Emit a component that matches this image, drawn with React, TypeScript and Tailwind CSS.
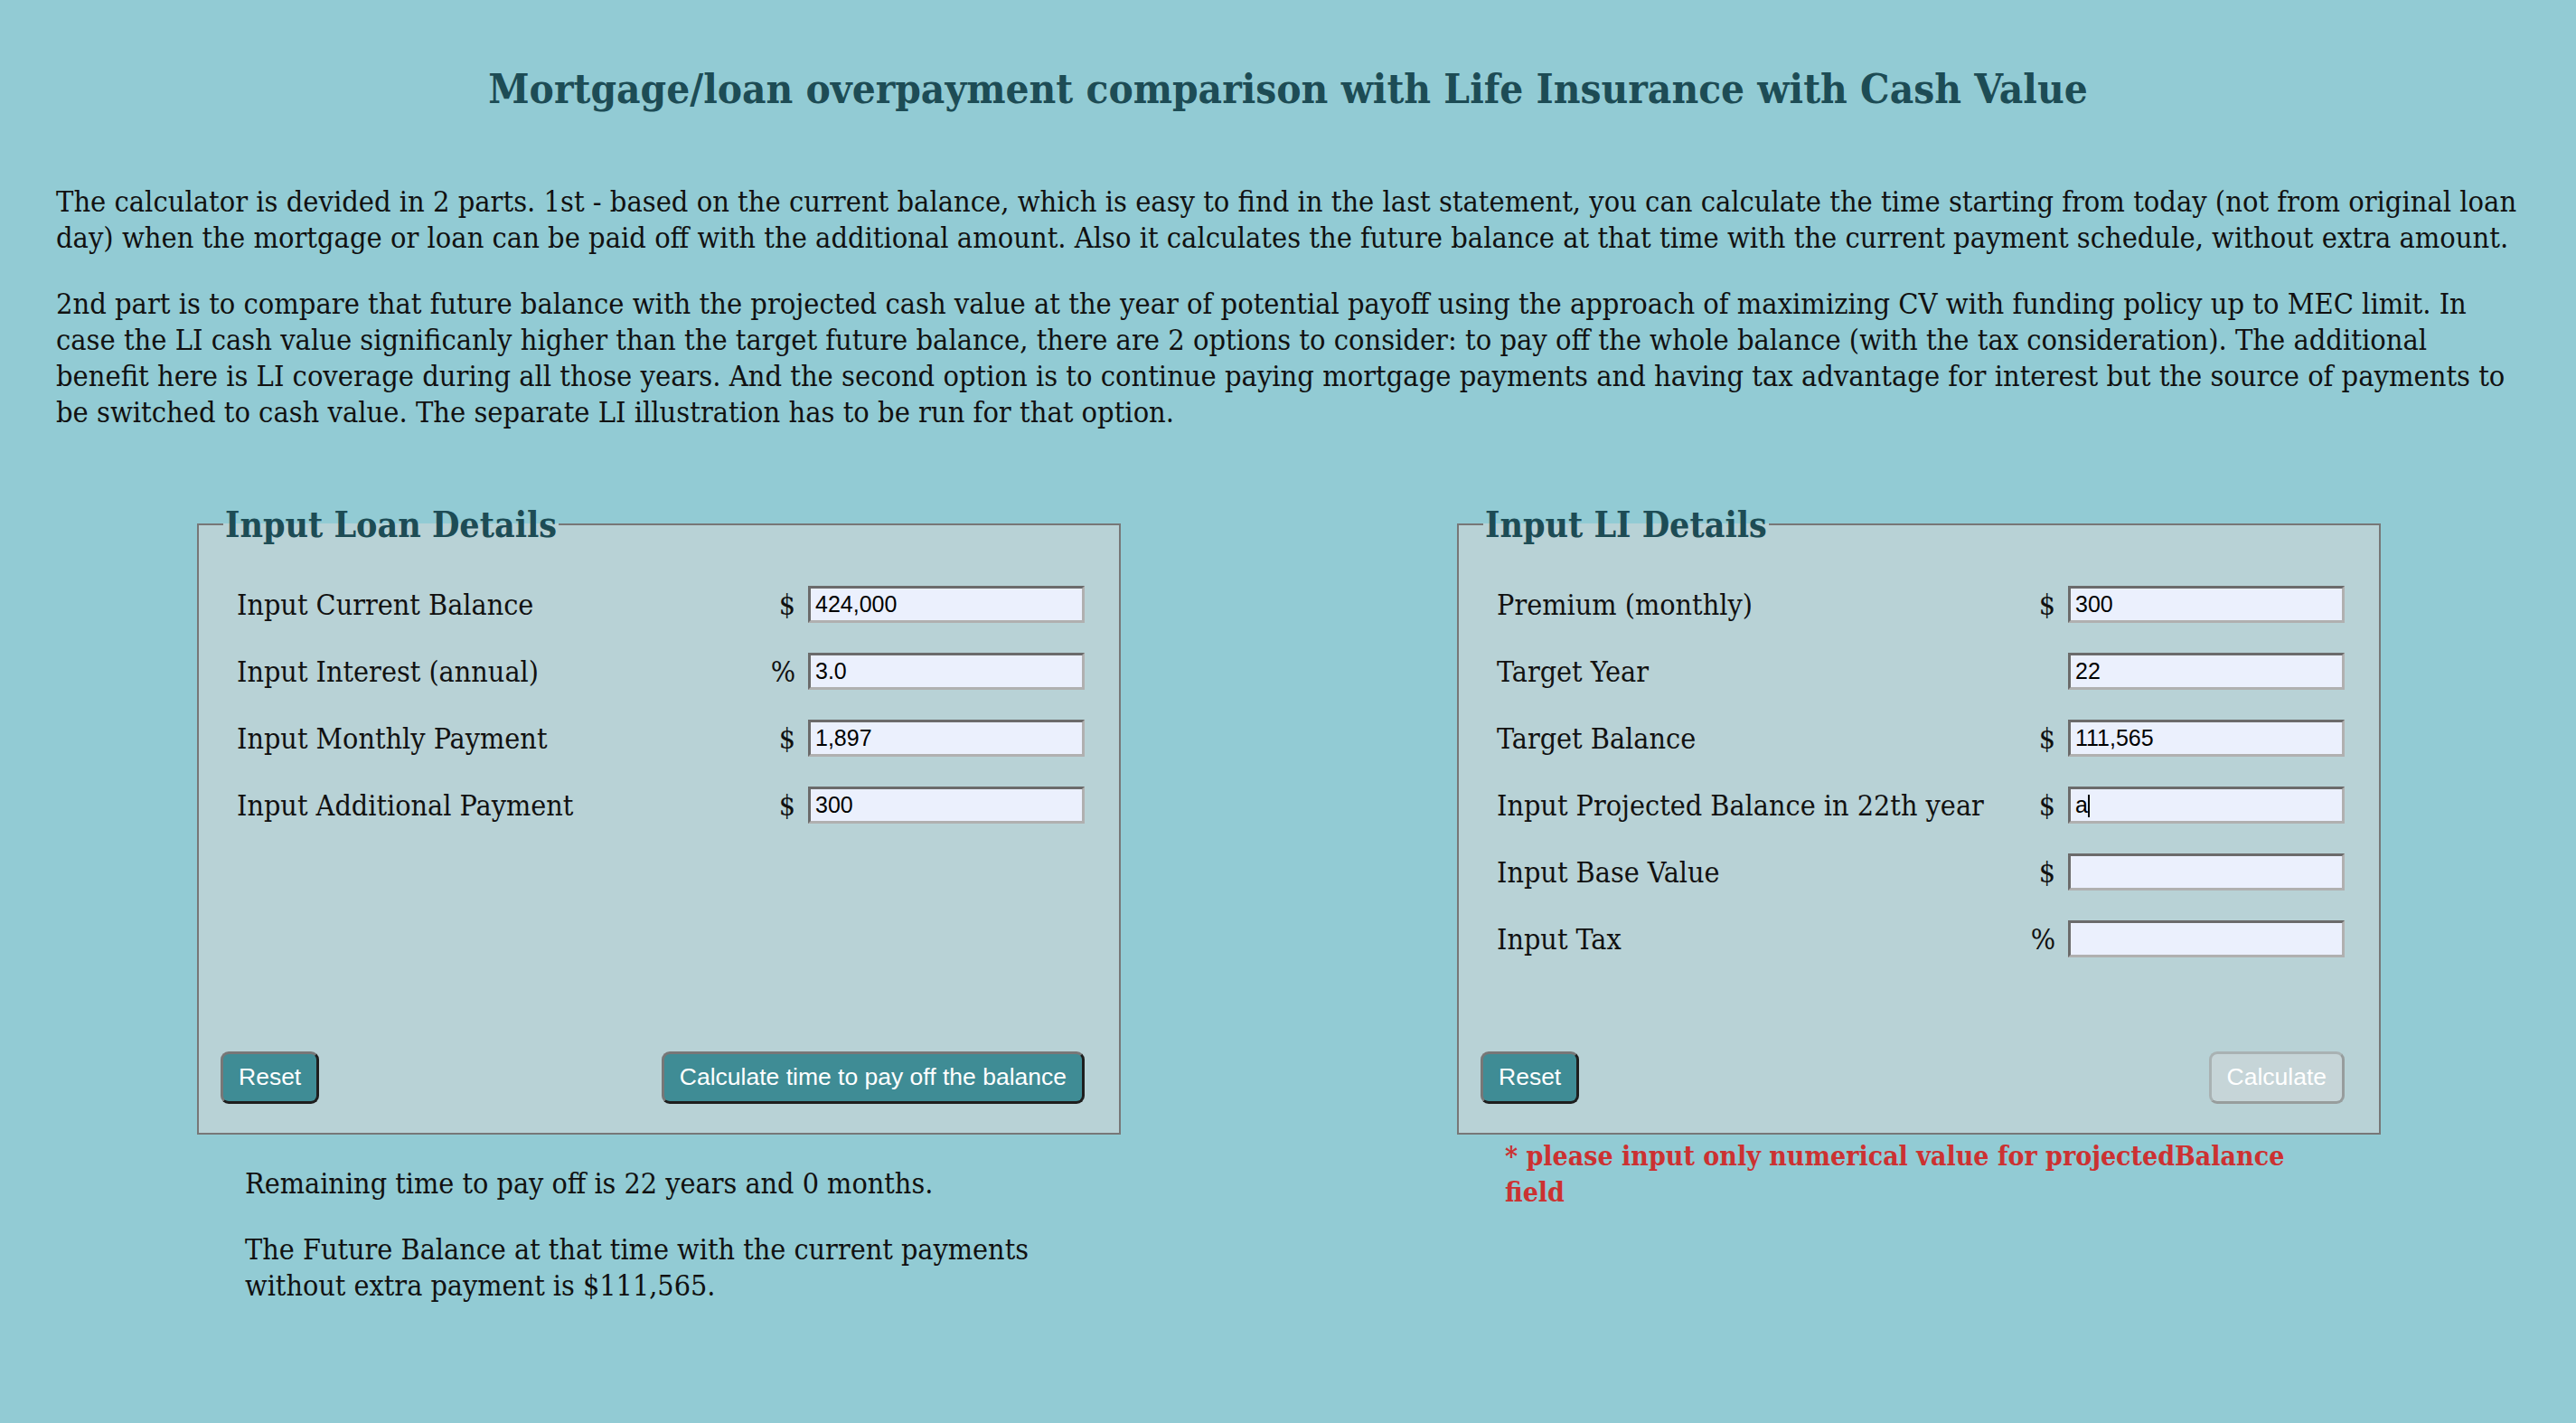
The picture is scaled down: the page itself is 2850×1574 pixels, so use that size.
import React from "react";

const serif = "font-['DejaVu_Serif_Condensed','DejaVu_Serif',serif]";
const sans = "font-['Liberation_Sans',Arial,sans-serif]";

type Row = { label: string; unit?: string; value: string; caret?: boolean };

const loanRows: Row[] = [
  { label: "Input Current Balance", unit: "$", value: "424,000" },
  { label: "Input Interest (annual)", unit: "%", value: "3.0" },
  { label: "Input Monthly Payment", unit: "$", value: "1,897" },
  { label: "Input Additional Payment", unit: "$", value: "300" },
];

const liRows: Row[] = [
  { label: "Premium (monthly)", unit: "$", value: "300" },
  { label: "Target Year", value: "22" },
  { label: "Target Balance", unit: "$", value: "111,565" },
  { label: "Input Projected Balance in 22th year", unit: "$", value: "a", caret: true },
  { label: "Input Base Value", unit: "$", value: "" },
  { label: "Input Tax", unit: "%", value: "" },
];

const para1 = [
  "The calculator is devided in 2 parts. 1st - based on the current balance, which is easy to find in the last statement, you can calculate the time starting from today (not from original loan",
  "day) when the mortgage or loan can be paid off with the additional amount. Also it calculates the future balance at that time with the current payment schedule, without extra amount.",
];

const para2 = [
  "2nd part is to compare that future balance with the projected cash value at the year of potential payoff using the approach of maximizing CV with funding policy up to MEC limit. In",
  "case the LI cash value significanly higher than the target future balance, there are 2 options to consider: to pay off the whole balance (with the tax consideration). The additional",
  "benefit here is LI coverage during all those years. And the second option is to continue paying mortgage payments and having tax advantage for interest but the source of payments to",
  "be switched to cash value. The separate LI illustration has to be run for that option.",
];

function InputRow({ row }: { row: Row }) {
  return (
    <div className="flex items-center h-[41px]">
      <label className="flex-1 text-[32px] leading-[40px] text-[#111]">{row.label}</label>
      <span className="text-[32px] leading-[40px] text-[#111] mr-[14px]">{row.unit ?? ""}</span>
      <div className="relative">
        <input
          readOnly
          value={row.value}
          className={`${sans} w-[306px] h-[41px] bg-[#ebf0fd] border-[3px] border-t-[#6b6b6b] border-l-[#6b6b6b] border-b-[#b0b0b0] border-r-[#b0b0b0] px-[5px] text-[25px] text-black outline-none`}
        />
        {row.caret && <span className="absolute left-[22px] top-[9px] w-[2px] h-[25px] bg-black" />}
      </div>
    </div>
  );
}

const btnActive =
  "h-[58px] px-[17px] rounded-[9px] bg-[#3f8c95] text-white text-[26.5px] border-[3px] border-t-[#777] border-l-[#777] border-b-[#1e1e1e] border-r-[#1e1e1e]";
const btnDisabled =
  "h-[58px] px-[17px] rounded-[9px] bg-[#c6d5d8] text-white text-[26.5px] border-[3px] border-t-[#a9b2b3] border-l-[#a9b2b3] border-b-[#979d9d] border-r-[#979d9d]";

function Panel({
  title,
  rows,
  calcLabel,
  calcDisabled,
}: {
  title: string;
  rows: Row[];
  calcLabel: string;
  calcDisabled?: boolean;
}) {
  return (
    <fieldset className="flex flex-col h-[699px] w-[1022px] bg-[#b8d2d6] border-2 border-[#777] pl-[24px] pr-[38px] pb-[32px] pt-[44px]">
      <legend className={`${serif} ml-[3px] px-[2px] text-[39px] leading-[48px] font-semibold text-[#1d4c55]`}>
        {title}
      </legend>
      <div className="flex flex-col gap-[33px] pl-[18px]">
        {rows.map((r) => (
          <InputRow key={r.label} row={r} />
        ))}
      </div>
      <div className="mt-auto flex justify-between items-center">
        <button className={`${sans} ${btnActive}`}>Reset</button>
        {calcDisabled ? (
          <button disabled className={`${sans} ${btnDisabled}`}>
            {calcLabel}
          </button>
        ) : (
          <button className={`${sans} ${btnActive}`}>{calcLabel}</button>
        )}
      </div>
    </fieldset>
  );
}

export default function App() {
  return (
    <div className={`${serif} min-h-screen w-full bg-[#92cbd4] text-[#111]`}>
      <h1 className="pt-[72px] text-center text-[45.5px] leading-[52px] font-semibold text-[#1d4c55]">
        Mortgage/loan overpayment comparison with Life Insurance with Cash Value
      </h1>
      <div className="px-[62px] mt-[79px] text-[32.3px] leading-[40px]">
        <p>
          {para1.map((l) => (
            <span key={l} className="block whitespace-nowrap">
              {l}
            </span>
          ))}
        </p>
        <p className="mt-[33px]">
          {para2.map((l) => (
            <span key={l} className="block whitespace-nowrap">
              {l}
            </span>
          ))}
        </p>
      </div>
      <div className="flex pl-[218px] gap-[372px] mt-[80px]">
        <div className="w-[1022px]">
          <Panel title="Input Loan Details" rows={loanRows} calcLabel="Calculate time to pay off the balance" />
          <div className="pl-[53px] mt-[34px] text-[32px] leading-[40px]">
            <p>Remaining time to pay off is 22 years and 0 months.</p>
            <p className="mt-[33px]">
              <span className="block whitespace-nowrap">The Future Balance at that time with the current payments</span>
              <span className="block whitespace-nowrap">without extra payment is $111,565.</span>
            </p>
          </div>
        </div>
        <div className="w-[1022px]">
          <Panel title="Input LI Details" rows={liRows} calcLabel="Calculate" calcDisabled />
          <p className="pl-[53px] mt-[4px] text-[30px] leading-[40px] font-bold text-[#cc3131]">
            <span className="block whitespace-nowrap">* please input only numerical value for projectedBalance</span>
            <span className="block whitespace-nowrap">field</span>
          </p>
        </div>
      </div>
    </div>
  );
}
